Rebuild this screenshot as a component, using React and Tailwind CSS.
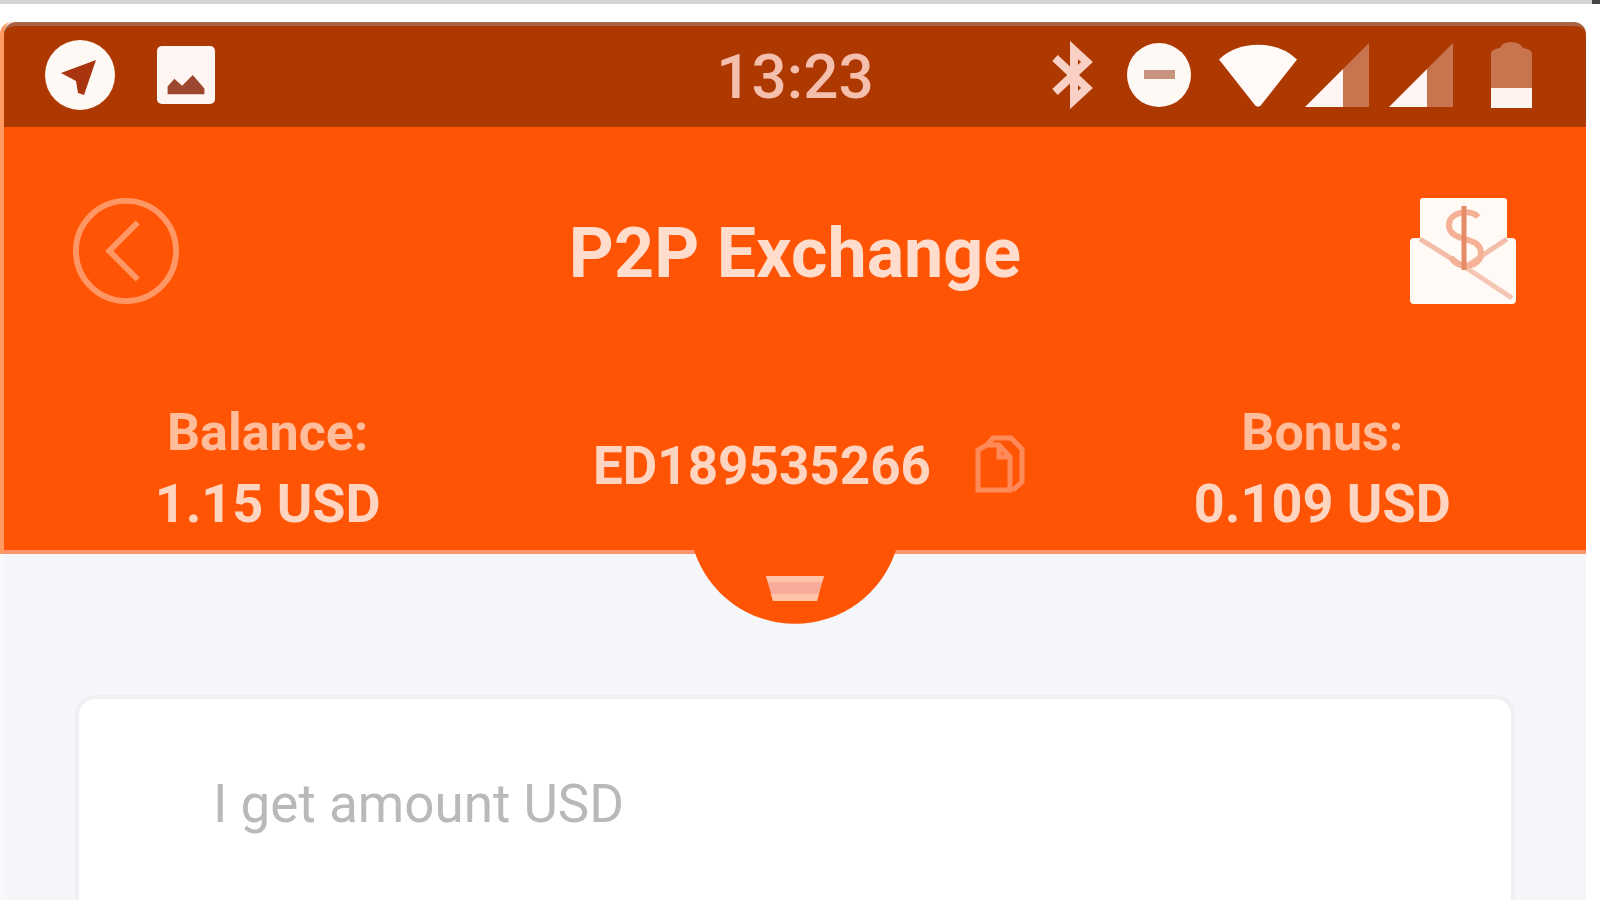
function StatusBar() {
  return (
    <div className="grid h-[105px] grid-cols-[1fr_auto_1fr] items-center rounded-t-xl border-t-4 border-[#aa6343] bg-[#ad3800] px-10 pb-1 text-white">
      <div className="flex items-center gap-10">
        <svg className="size-[72px]" viewBox="0 0 72 72">
          <circle cx="36" cy="36" r="35" fill="#fff9f6" />
          <path d="M17 34L52 21L40 56L34 54L32 42Z" fill="#a83410" />
        </svg>
        <svg className="size-[60px]" viewBox="0 0 62 62">
          <rect x="1" y="1" width="60" height="60" rx="5" fill="#fff6f3" />
          <path d="M12 51V43L19 35L27 42L38 31L50 45V51Z" fill="#9c4830" />
        </svg>
      </div>

      <time className="pt-1 text-[62px] leading-none font-medium text-[#f5bfae]">13:23</time>

      <div className="flex items-center justify-end">
        {/* Bluetooth */}
        <svg className="mr-8 h-[68px] w-11" viewBox="0 0 44 68">
          <path
            d="M4 17L36 47L23 59V9L36 21L4 51"
            fill="none"
            stroke="#fbd0c4"
            strokeWidth="8"
          />
        </svg>
        {/* Do not disturb */}
        <svg className="mr-7 size-16" viewBox="0 0 64 64">
          <circle cx="32" cy="32" r="32" fill="#fff9f6" />
          <rect x="17" y="27" width="31" height="9" fill="#c8937c" />
        </svg>
        {/* Wifi */}
        <svg className="mr-2 h-[66px] w-[78px]" viewBox="0 0 80 66">
          <path d="M0 17Q16 2 40 2T80 17L43 64Q40 67 37 64Z" fill="#fffaf8" />
        </svg>
        <Signal className="mr-5" />
        <Signal className="mr-[38px]" />
        {/* Battery */}
        <svg className="mr-3.5 h-[66px] w-[41px]" viewBox="0 0 41 66">
          <path d="M0 47V11Q1 7 9 6Q11 0 20 0T32 6Q40 7 41 11V47Z" fill="#c8744f" />
          <rect y="46" width="41" height="20" fill="#fff3ef" />
        </svg>
      </div>
    </div>
  );
}

function Signal({ className }) {
  return (
    <svg className={`size-16 ${className}`} viewBox="0 0 64 64">
      <path d="M64 0V64H38V26Z" fill="#c8744f" />
      <path d="M38 26V64H0Z" fill="#fff6f3" />
    </svg>
  );
}

function TitleBar() {
  return (
    <div className="mt-[70px] grid grid-cols-[1fr_auto_1fr] items-center px-[68px]">
      <button type="button" aria-label="Back" className="justify-self-start">
        <svg className="size-[108px]" viewBox="0 0 110 110" fill="none" stroke="#ff9765">
          <circle cx="55" cy="55" r="51" strokeWidth="6" />
          <path d="M67 26L38 55L67 84" strokeWidth="6" />
        </svg>
      </button>
      <h1 className="pt-1 text-[70px] leading-[80px] font-bold text-[#ffdccb]">P2P Exchange</h1>
      <button type="button" aria-label="Vouchers" className="justify-self-end">
        <svg className="size-[108px]" viewBox="0 0 108 108" fill="none">
          <path d="M10 41V4Q10 1 13 1H94Q97 1 97 4V41H102Q106 41 106 45V103Q106 107 102 107H4Q0 107 0 103V45Q0 41 4 41Z" fill="#fffaf5" />
          <path d="M10 42L55 70L97 42" stroke="#f3bda7" strokeWidth="5" />
          <path d="M55 70L102 101" stroke="#f6c6b4" strokeWidth="5" />
          <path
            d="M68 20C62 12 39 14 39 28C39 46 71 38 71 56C71 71 47 73 41 60"
            stroke="#f5b196"
            strokeWidth="6"
          />
          <path d="M54 9V73" stroke="#e58b66" strokeWidth="5" />
        </svg>
      </button>
    </div>
  );
}

function Amount({ label, value }) {
  return (
    <div className="text-center font-bold">
      <dt className="text-[52px] leading-[71px] text-[#ffbd9c]">{label}</dt>
      <dd className="text-[54px] leading-[71px] text-[#ffd5c2]">{value}</dd>
    </div>
  );
}

function AccountRow() {
  return (
    <dl className="mt-[92px] grid grid-cols-3">
      <Amount label="Balance:" value="1.15 USD" />
      <div className="flex items-center justify-center gap-11 pb-1 pl-7">
        <dd className="text-[53px] leading-[71px] font-bold text-[#ffd5c2]">ED189535266</dd>
        <button type="button" aria-label="Copy account number" className="mb-1">
          <svg className="h-[58px] w-[50px]" viewBox="0 0 50 58" fill="none" stroke="#ff8a59" strokeWidth="5">
            <path d="M3 15L12 10H24L35 22V55H3Z" />
            <path d="M24 10V22H35" />
            <path d="M12 10L18 3H36L47 14V47L38 55" />
          </svg>
        </button>
      </div>
      <Amount label="Bonus:" value="0.109 USD" />
    </dl>
  );
}

function Header() {
  return (
    <header className="relative h-[427px] border-b-4 border-[#ff946e] bg-[#ff5403]">
      <div className="flow-root">
        <TitleBar />
        <AccountRow />
      </div>
      {/* Pull-down handle hangs below the header */}
      <button
        type="button"
        aria-label="Show more"
        className="absolute top-full left-1/2 -translate-x-1/2"
      >
        <svg className="h-[75px] w-[202px]" viewBox="0 0 202 75">
          <path d="M0 0A106 106 0 0 0 202 0Z" fill="#ff5403" />
          <path d="M72 26H130L123 51H79Z" fill="#f8ab98" />
          <path d="M72 26H130L128 32H74ZM77 44H125L123 51H79Z" fill="#ffc3a6" />
        </svg>
      </button>
    </header>
  );
}

export default function App() {
  return (
    <div className="flex h-screen flex-col overflow-hidden bg-white font-[Roboto,sans-serif]">
      <div className="flex h-1 shrink-0 justify-end bg-[#d4d4d4]">
        <div className="w-2 bg-[#444]" />
      </div>
      <div className="mt-[18px] mr-[14px] flex flex-1 flex-col rounded-t-xl border-l-4 border-[#ff9a62] bg-[#f4f6fa]">
        <StatusBar />
        <Header />
        <main className="-ml-1 flex flex-1 flex-col border-l-4 border-[#f8f9fb] px-[71px] pt-[141px]">
          <form className="flex-1 rounded-t-[20px] border-4 border-b-0 border-[#eff0f3] bg-white px-[134px] pt-[65px]">
            <input
              type="text"
              aria-label="I get amount USD"
              placeholder="I get amount USD"
              className="w-full text-[53px] leading-[80px] text-gray-700 outline-none placeholder:text-[#b9b9b9]"
            />
          </form>
        </main>
      </div>
    </div>
  );
}
